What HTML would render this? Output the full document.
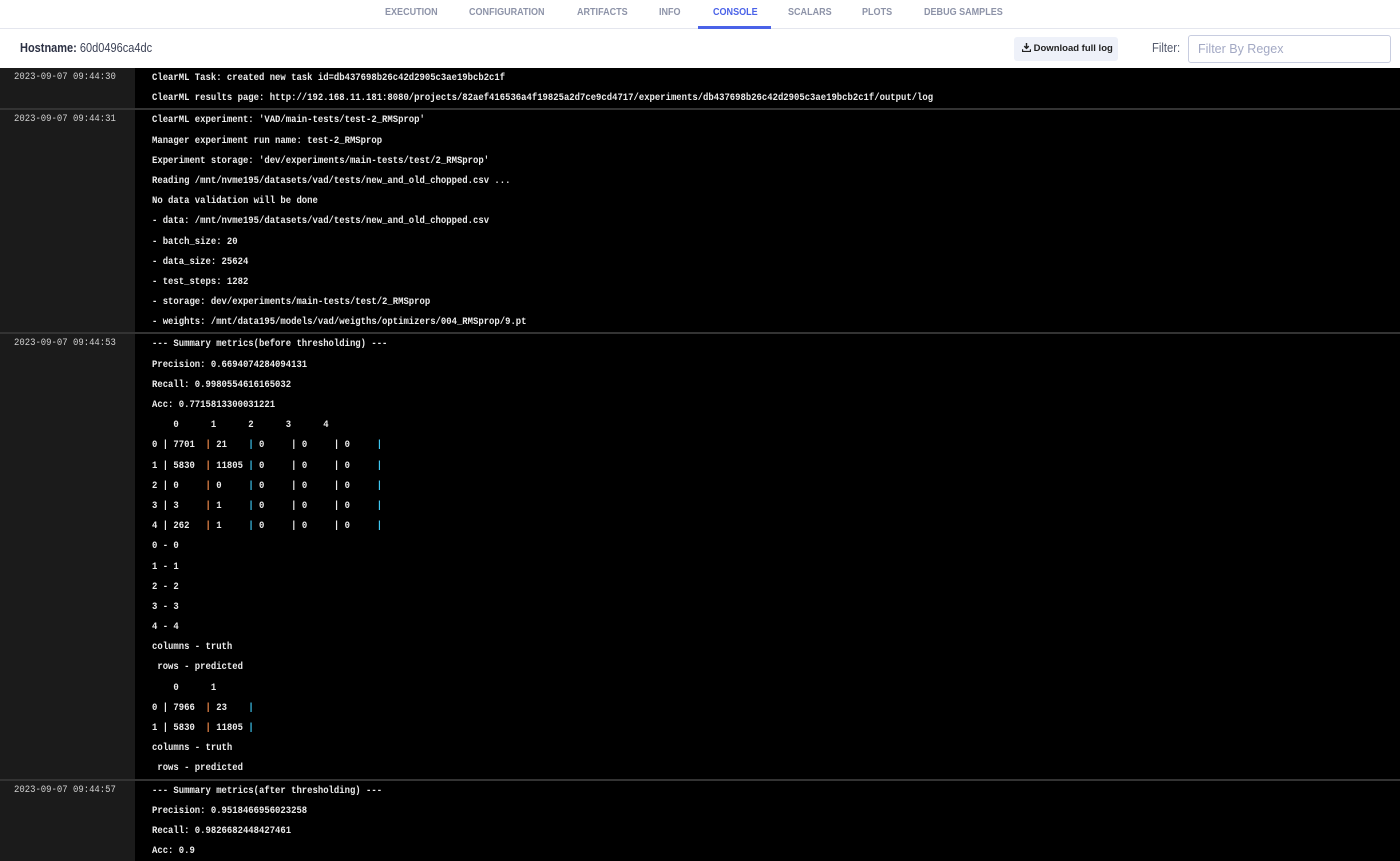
<!DOCTYPE html>
<html><head><meta charset="utf-8"><style>
*{margin:0;padding:0;box-sizing:border-box}
body{width:1400px;height:840px;overflow:hidden;background:#000;font-family:"Liberation Sans",sans-serif;position:relative}
.top{position:absolute;left:0;top:0;width:1400px;height:68px;background:#fff}
.tabs{position:absolute;left:0;top:0;width:1400px;height:29px;border-bottom:1px solid #e4e6ee}
.tab{position:absolute;top:6px;font-size:10.5px;font-weight:bold;color:#8d93a8;transform:scaleX(0.86);transform-origin:left}
.tab.act{color:#4a62e8}
.ul{position:absolute;left:698px;top:26px;width:73px;height:3px;background:#4a62e8}
.host{position:absolute;left:20px;top:41px;font-size:12.5px;color:#3c4256;transform:scaleX(0.88);transform-origin:left;white-space:nowrap}
.host b{color:#2c3144}
.btn{position:absolute;left:1014px;top:37px;width:104px;height:24px;background:#eef1f9;border-radius:3px;font-size:9.5px;font-weight:bold;color:#222;line-height:24px;padding-left:8px}
.flab{position:absolute;left:1152px;top:41px;font-size:12.5px;color:#555b6e;transform:scaleX(0.9);transform-origin:left}
.inp{position:absolute;left:1188px;top:35px;width:203px;height:28px;border:1px solid #c8cde0;border-radius:3px;font-size:12.5px;color:#a3a9c4;padding:6px 9px}
.log{position:absolute;left:0;top:68px;width:1400px}
.g{display:flex;border-bottom:2px solid #333}
.ts{width:135px;background:#1b1b1b;flex:none;padding-left:14px;padding-top:3px}
.ts span{display:block;color:#d0d0d0;font-family:"Liberation Mono",monospace;font-size:10.4px;transform:scaleX(0.86);transform-origin:left;white-space:pre}
.tx{flex:1;padding-left:17px}
.tx div{height:20.2px;line-height:20.2px;font-family:"Liberation Mono",monospace;font-size:10.4px;font-weight:bold;color:#ececec;white-space:pre;transform:scaleX(0.858);transform-origin:left}
.o{color:#f08a4b}.c{color:#3ec6f0}
</style></head><body>
<div class="top">
<div class="tabs">
<span class="tab" style="left:385px">EXECUTION</span>
<span class="tab" style="left:469px">CONFIGURATION</span>
<span class="tab" style="left:577px">ARTIFACTS</span>
<span class="tab" style="left:659px">INFO</span>
<span class="tab act" style="left:713px">CONSOLE</span>
<span class="tab" style="left:788px">SCALARS</span>
<span class="tab" style="left:862px">PLOTS</span>
<span class="tab" style="left:924px">DEBUG SAMPLES</span>
<div class="ul"></div>
</div>
<div class="host"><b>Hostname:</b> 60d0496ca4dc</div>
<div class="btn"><svg width="9" height="9" viewBox="0 0 10 10" style="vertical-align:-1px"><path d="M5 0v6M2.5 3.5L5 6l2.5-2.5M0.5 7v2.5h9V7" stroke="#222" stroke-width="1.6" fill="none"/></svg> Download full log</div>
<div class="flab">Filter:</div>
<div class="inp">Filter By Regex</div>
</div>
<div class="log">
<div class="g"><div class="ts"><span>2023-09-07 09:44:30</span></div><div class="tx"><div>ClearML Task: created new task id=db437698b26c42d2905c3ae19bcb2c1f</div><div>ClearML results page: http://192.168.11.181:8080/projects/82aef416536a4f19825a2d7ce9cd4717/experiments/db437698b26c42d2905c3ae19bcb2c1f/output/log</div></div></div>
<div class="g"><div class="ts"><span>2023-09-07 09:44:31</span></div><div class="tx"><div>ClearML experiment: 'VAD/main-tests/test-2_RMSprop'</div><div>Manager experiment run name: test-2_RMSprop</div><div>Experiment storage: 'dev/experiments/main-tests/test/2_RMSprop'</div><div>Reading /mnt/nvme195/datasets/vad/tests/new_and_old_chopped.csv ...</div><div>No data validation will be done</div><div>- data: /mnt/nvme195/datasets/vad/tests/new_and_old_chopped.csv</div><div>- batch_size: 20</div><div>- data_size: 25624</div><div>- test_steps: 1282</div><div>- storage: dev/experiments/main-tests/test/2_RMSprop</div><div>- weights: /mnt/data195/models/vad/weigths/optimizers/004_RMSprop/9.pt</div></div></div>
<div class="g"><div class="ts"><span>2023-09-07 09:44:53</span></div><div class="tx"><div>--- Summary metrics(before thresholding) ---</div><div>Precision: 0.6694074284094131</div><div>Recall: 0.9980554616165032</div><div>Acc: 0.7715813300031221</div><div>    0      1      2      3      4</div><div>0 | 7701  <span class="o">|</span> 21    <span class="c">|</span> 0     | 0     | 0     <span class="c">|</span></div><div>1 | 5830  <span class="o">|</span> 11805 <span class="c">|</span> 0     | 0     | 0     <span class="c">|</span></div><div>2 | 0     <span class="o">|</span> 0     <span class="c">|</span> 0     | 0     | 0     <span class="c">|</span></div><div>3 | 3     <span class="o">|</span> 1     <span class="c">|</span> 0     | 0     | 0     <span class="c">|</span></div><div>4 | 262   <span class="o">|</span> 1     <span class="c">|</span> 0     | 0     | 0     <span class="c">|</span></div><div>0 - 0</div><div>1 - 1</div><div>2 - 2</div><div>3 - 3</div><div>4 - 4</div><div>columns - truth</div><div> rows - predicted</div><div>    0      1</div><div>0 | 7966  <span class="o">|</span> 23    <span class="c">|</span></div><div>1 | 5830  <span class="o">|</span> 11805 <span class="c">|</span></div><div>columns - truth</div><div> rows - predicted</div></div></div>
<div class="g" style="border:none"><div class="ts"><span>2023-09-07 09:44:57</span></div><div class="tx"><div>--- Summary metrics(after thresholding) ---</div><div>Precision: 0.9518466956023258</div><div>Recall: 0.9826682448427461</div><div>Acc: 0.9</div></div></div>
</div>
</body></html>
